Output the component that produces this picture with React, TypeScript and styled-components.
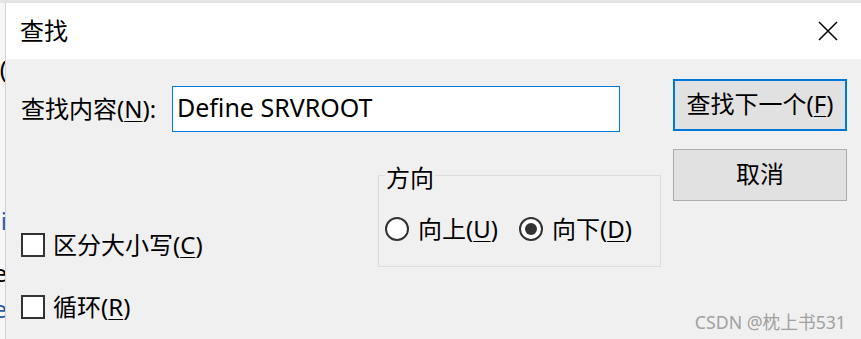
import React from "react";
import styled, { createGlobalStyle } from "styled-components";

const GlobalStyle = createGlobalStyle`
  html, body { margin: 0; padding: 0; background: #fff; }
  body {
    width: 861px; height: 339px; overflow: hidden;
    font-family: "Noto Sans", "Noto Sans CJK SC", sans-serif;
    color: #000;
  }
`;

const Page = styled.div`
  width: 861px; height: 339px;
  display: flex; flex-direction: column;
  background: #fff; overflow: hidden; position: relative;
`;

const TopStrip = styled.div`
  height: 3px; flex: none; background: #e4e4e4;
`;

const Stage = styled.div`
  flex: 1; min-height: 0; display: flex;
`;

const BackdropEdge = styled.div`
  width: 5px; flex: none; background: #f6f6f6; overflow: hidden;
  display: flex; flex-direction: column; align-items: flex-end;
`;

const Fragment = styled.span<{ $top: number; $color?: string }>`
  margin-top: ${(p) => p.$top}px;
  font-family: "Noto Sans", sans-serif;
  font-size: 24px; line-height: 24px; white-space: nowrap;
  color: ${(p) => p.$color ?? "#000"};
  margin-right: -2px;
`;

const Dialog = styled.div`
  flex: 1; min-width: 0; display: flex; flex-direction: column;
  border-left: 1px solid #d2d2d2;
`;

const TitleBar = styled.div`
  height: 56px; flex: none; background: #fff;
  display: flex; align-items: center; justify-content: space-between;
  padding: 0 23px 0 14px;
`;

const Title = styled.div`
  font-size: 24px; line-height: 26px;
`;

const CloseIcon = styled.svg`
  width: 20px; height: 20px; display: block; margin-top: -1px;
`;

const Body = styled.div`
  flex: 1; background: #f0f0f0; position: relative;
  display: grid; grid-template-columns: 640px 174px; column-gap: 12px;
  padding: 20px 14px 0 15px; align-items: start;
`;

const MainColumn = styled.div`
  display: flex; flex-direction: column;
`;

const FindRow = styled.div`
  margin-top: 7px; height: 46px; display: flex; align-items: center;
`;

const Label = styled.label`
  width: 151px; flex: none; font-size: 24px; line-height: 26px;
  white-space: nowrap;
`;

const Mn = styled.u`
  text-decoration: underline; text-underline-offset: 3px;
  text-decoration-thickness: 1px;
`;

const TextInput = styled.input`
  width: 448px; height: 46px; box-sizing: border-box;
  border: 1px solid #0078d7; background: #fff; outline: none;
  padding: 0 0 4px 4px; margin: 0;
  font-family: "Noto Sans", sans-serif; font-size: 25px; color: #000;
`;

const LowerRow = styled.div`
  margin-top: 27px; display: flex; align-items: flex-start;
`;

const OptionColumn = styled.div`
  width: 357px; flex: none; display: flex; flex-direction: column;
`;

const CheckRow = styled.div<{ $top: number }>`
  margin-top: ${(p) => p.$top}px; height: 30px;
  display: flex; align-items: center;
  font-size: 24px; line-height: 26px; white-space: nowrap;
`;

const CheckBox = styled.span`
  width: 24px; height: 24px; box-sizing: border-box; flex: none;
  border: 2px solid #333; background: #fff; margin-right: 8px;
`;

const Group = styled.fieldset`
  width: 284px; box-sizing: border-box; margin: 0;
  padding: 0 6px 22px 6px; border: 1px solid #dcdcdc;
`;

const Legend = styled.legend`
  padding: 6px 1px 0 1px; font-size: 24px; line-height: 26px;
`;

const RadioRow = styled.div`
  margin-top: 23px; height: 30px; display: flex; align-items: center; gap: 21px;
`;

const RadioOption = styled.div`
  display: flex; align-items: center;
  font-size: 24px; line-height: 26px; white-space: nowrap;
`;

const RadioCircle = styled.span`
  width: 24px; height: 24px; box-sizing: border-box; flex: none;
  border: 2px solid #333; border-radius: 50%; background: #fff;
  margin-right: 9px; display: flex; align-items: center; justify-content: center;
`;

const RadioDot = styled.span`
  width: 12px; height: 12px; border-radius: 50%; background: #333;
`;

const ButtonColumn = styled.div`
  display: flex; flex-direction: column; gap: 18px;
`;

const Button = styled.button<{ $focused?: boolean }>`
  height: 52px; box-sizing: border-box; margin: 0; padding: 0 0 2px 0;
  background: #e1e1e1; color: #000;
  border: ${(p) => (p.$focused ? "2px solid #0078d7" : "1px solid #adadad")};
  font-family: "Noto Sans", "Noto Sans CJK SC", sans-serif;
  font-size: 24px; line-height: 26px; white-space: nowrap;
`;

const Watermark = styled.div`
  position: absolute; right: 15px; bottom: 7px;
  font-family: "Noto Sans", "Noto Sans CJK SC", sans-serif;
  font-size: 17.7px; line-height: 20px; color: #a0a0a0; white-space: nowrap;
`;

export default function App() {
  return (
    <>
      <GlobalStyle />
      <Page>
        <TopStrip />
        <Stage>
          <BackdropEdge>
            <Fragment $top={54}>(</Fragment>
            <Fragment $top={128} $color="#1f5fb0">i</Fragment>
            <Fragment $top={28}>e</Fragment>
            <Fragment $top={12} $color="#1f5fb0">e</Fragment>
          </BackdropEdge>
          <Dialog>
            <TitleBar>
              <Title>查找</Title>
              <CloseIcon viewBox="0 0 20 20">
                <path d="M1 1 L19 19 M19 1 L1 19" stroke="#000" strokeWidth="1.5" fill="none" />
              </CloseIcon>
            </TitleBar>
            <Body>
              <MainColumn>
                <FindRow>
                  <Label>
                    查找内容(<Mn>N</Mn>):
                  </Label>
                  <TextInput readOnly value="Define SRVROOT" />
                </FindRow>
                <LowerRow>
                  <OptionColumn>
                    <CheckRow $top={71}>
                      <CheckBox />
                      区分大小写(<Mn>C</Mn>)
                    </CheckRow>
                    <CheckRow $top={32}>
                      <CheckBox />
                      循环(<Mn>R</Mn>)
                    </CheckRow>
                  </OptionColumn>
                  <Group>
                    <Legend>方向</Legend>
                    <RadioRow>
                      <RadioOption>
                        <RadioCircle />
                        向上(<Mn>U</Mn>)
                      </RadioOption>
                      <RadioOption>
                        <RadioCircle>
                          <RadioDot />
                        </RadioCircle>
                        向下(<Mn>D</Mn>)
                      </RadioOption>
                    </RadioRow>
                  </Group>
                </LowerRow>
              </MainColumn>
              <ButtonColumn>
                <Button $focused>
                  查找下一个(<Mn>F</Mn>)
                </Button>
                <Button>取消</Button>
              </ButtonColumn>
              <Watermark>CSDN @枕上书531</Watermark>
            </Body>
          </Dialog>
        </Stage>
      </Page>
    </>
  );
}
